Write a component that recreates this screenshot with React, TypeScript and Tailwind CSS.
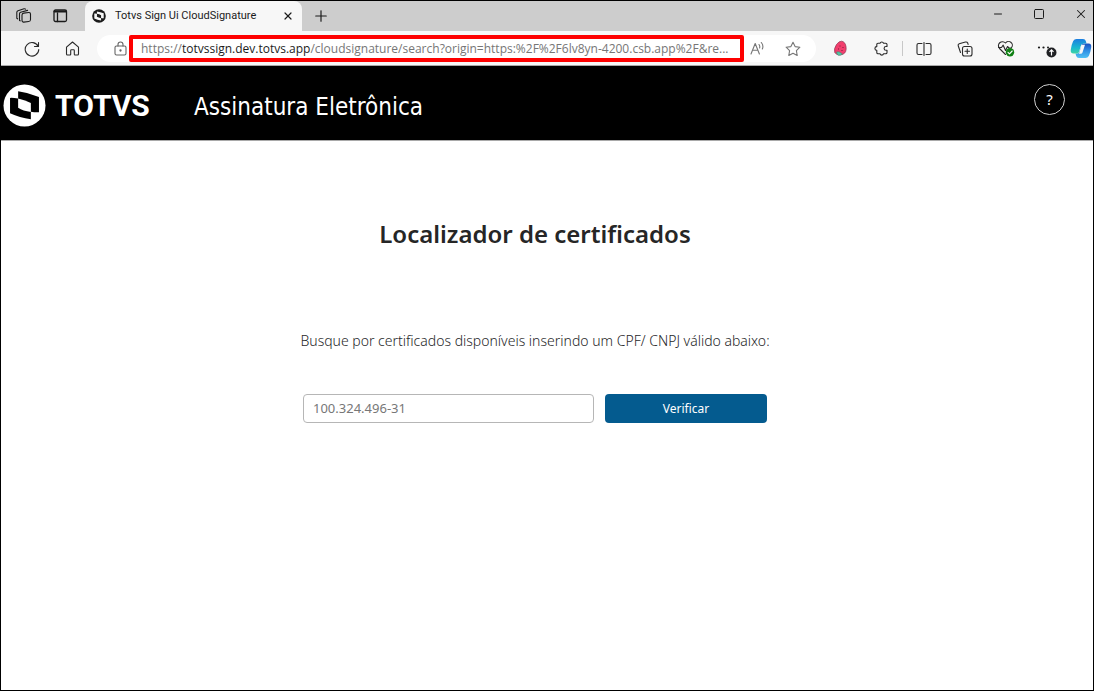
import React from 'react';
import { X, Plus, Minus, Square } from 'lucide-react';

const iconProps = {
  fill: 'none',
  stroke: 'currentColor',
  strokeWidth: 1.1,
  strokeLinecap: 'round' as const,
  strokeLinejoin: 'round' as const,
};

function TotvsMark({ size, fg, bg }: { size: number; fg: string; bg: string }) {
  return (
    <svg width={size} height={size} viewBox="0 0 44 44" aria-hidden="true" className="shrink-0">
      <circle cx="22" cy="22" r="21.5" fill={fg} />
      <path d="M15.500 7.500 Q26 8.800 36.800 13.400 V28.800 Q33 29 28.500 28.300 V36 Q17 34.500 7.200 30 V14.200 Q10 14 15.500 14.800 Z" fill={bg} />
      <path d="M15.500 14.800 Q23 16.300 28.500 19.500 V28.700 Q20.500 27.500 15.500 24.300 Z" fill={fg} />
    </svg>
  );
}

function ToolButton({ label, children }: { label: string; children: React.ReactNode }) {
  return (
    <button aria-label={label} className="flex w-10 shrink-0 items-center justify-center">
      {children}
    </button>
  );
}

function TabStrip() {
  return (
    <div className="flex h-[30px] bg-[#cdcdcd] text-[#1b1b1b]">
      <div className="flex w-[84px] shrink-0 items-center gap-5 rounded-br-lg pl-[14px]">
        <button aria-label="Workspaces">
          <svg width="18" height="18" viewBox="0 0 18 18" {...iconProps}>
            <rect x="7" y="6" width="8.500" height="9" rx="1.800" transform="skewY(-6) translate(0 1)" />
            <path d="M5.200 13.800 4.500 13.400V6.800Q4.500 5.600 5.600 5.200L12.600 3.400" />
            <path d="M2.600 11.800 1.800 11.200V5.500Q1.800 4.200 3 3.800L9 1.800Q10 1.600 10.600 2.200" />
          </svg>
        </button>
        <button aria-label="Vertical tabs">
          <svg width="15" height="14" viewBox="0 0 15 14" {...iconProps} strokeWidth={1.3}>
            <rect x="1" y="1" width="12.500" height="11.500" rx="1.500" />
            <path d="M1.500 2.500H13" strokeWidth="2" />
            <path d="M4.500 4V12.500" />
          </svg>
        </button>
      </div>
      <div className="flex w-[217px] shrink-0 items-center rounded-t-lg bg-[#f7f7f7] pl-[7px] pr-2">
        <TotvsMark size={14} fg="#1b1b1b" bg="#f7f7f7" />
        <span className="ml-[9px] flex-1 whitespace-nowrap font-['Roboto',sans-serif] text-[11px]">Totvs Sign Ui CloudSignature</span>
        <button aria-label="Close tab">
          <X size={12} strokeWidth={2.4} />
        </button>
      </div>
      <button aria-label="New tab" className="ml-[10px] self-center">
        <Plus size={18} strokeWidth={1.6} />
      </button>
      <div className="ml-auto flex items-center gap-[29px] pr-[5px] pb-1">
        <button aria-label="Minimize">
          <Minus size={12} strokeWidth={2} />
        </button>
        <button aria-label="Maximize">
          <Square size={12} strokeWidth={2} />
        </button>
        <button aria-label="Close">
          <X size={14} strokeWidth={1.8} />
        </button>
      </div>
    </div>
  );
}

function AddressBar() {
  return (
    <div className="flex h-[27px] min-w-0 flex-1 items-center rounded-full bg-white">
      <button aria-label="Site information" className="flex w-8 shrink-0 justify-end pr-[2px] text-[#666]">
        <svg width="13" height="15" viewBox="0 0 13 15" {...iconProps}>
          <rect x="1" y="5" width="11" height="9" rx="1.500" />
          <path d="M4 5V3.500A2.500 2.500 0 0 1 9 3.500V5" />
          <circle cx="6.500" cy="9.500" r="0.600" fill="currentColor" />
        </svg>
      </button>
      <div
        role="textbox"
        tabIndex={0}
        aria-label="Address"
        className="flex h-[27px] min-w-0 flex-1 items-center rounded-xs border-4 border-[#fe0000] bg-white px-2 text-[#767676]"
      >
        <span className="whitespace-nowrap font-['Open_Sans',sans-serif] text-[12px]">
          https://<span className="text-[#1b1b1b]">totvssign.dev.totvs.app</span>
          /cloudsignature/search?origin=https:%2F%2F6lv8yn-4200.csb.app%2F&amp;re...
        </span>
      </div>
      <div className="flex shrink-0 items-center gap-5 pr-[15px] pl-[6px] text-[#767676]">
        <button aria-label="Read aloud">
          <svg width="15" height="15" viewBox="0 0 15 15" {...iconProps}>
            <path d="M1 13 5.200 2.500 9.400 13M2.600 9.300H7.900" />
            <path d="M9 3.500Q10.200 5 9.600 7M11.300 1.500Q13.900 4.500 12.300 8" />
          </svg>
        </button>
        <button aria-label="Add to favorites">
          <svg width="16" height="16" viewBox="0 0 16 16" {...iconProps}>
            <path d="M8 1.200 10.100 5.600 14.900 6.200 11.400 9.600 12.200 14.500 8 12.200 3.800 14.500 4.600 9.600 1.100 6.200 5.900 5.600Z" />
          </svg>
        </button>
      </div>
    </div>
  );
}

function Toolbar() {
  return (
    <div className="flex h-[35px] items-stretch border-b border-[#a9a9a9] bg-[#f7f7f7] pt-px pl-[11px] text-[#2b2b2b]">
      <ToolButton label="Refresh">
        <svg width="16" height="16" viewBox="0 0 16 16" {...iconProps}>
          <path d="M14.200 5.500A6.800 6.800 0 1 0 14.800 8.600M14.500 1.500V5.500H10.500" />
        </svg>
      </ToolButton>
      <ToolButton label="Home">
        <svg width="15" height="15" viewBox="0 0 15 15" {...iconProps}>
          <path d="M1.500 6.200 7.500 1 13.500 6.200V13Q13.500 14 12.500 14H10Q9.300 14 9.300 13.300V9.500Q9.300 8.800 8.600 8.800H6.400Q5.700 8.800 5.700 9.500V13.300Q5.700 14 5 14H2.500Q1.500 14 1.500 13Z" />
        </svg>
      </ToolButton>
      <div className="flex min-w-0 flex-1 items-center pr-1 pl-[5px]">
        <AddressBar />
      </div>
      <div className="flex shrink-0 gap-px">
        <ToolButton label="Extension">
          <svg width="15" height="17" viewBox="0 0 15 17">
            <path d="M8.500 1.200Q12 1.500 13 6.500Q14 12.500 9.500 14.500Q4 16 1.800 12.500Q0.500 9 3.500 4.500Q6 1 8.500 1.200Z" fill="#f23e6d" stroke="#8f3350" strokeWidth="0.700" />
            <path d="M3.500 12 6 11.800 9.500 14Q7.500 15.800 5.200 15.200Q4 14.500 3.500 12Z" fill="#54c7a6" stroke="#34876f" strokeWidth="0.500" />
            <path d="M7 5.500V6.500M10 7V8M5.500 8.500V9.500M9 10V11" stroke="#74213b" strokeWidth="1" />
          </svg>
        </ToolButton>
        <ToolButton label="Extensions">
          <svg width="15" height="15" viewBox="0 0 15 15" {...iconProps}>
            <path d="M2.800 3.500Q2.800 2.300 4 2.300H6A1.900 1.900 0 0 1 9.600 2.300H11.700Q13 2.300 13 3.500V5.500H12A1.900 1.900 0 0 0 12 9.300H13V11.500Q13 12.800 11.700 12.800H9.600A1.900 1.900 0 0 1 6 12.800H4Q2.800 12.800 2.800 11.500V9.400A1.900 1.900 0 0 1 2.800 5.600Z" />
          </svg>
        </ToolButton>
        <div className="h-[15px] w-px self-center bg-[#c8c8c8]" />
        <ToolButton label="Split screen">
          <svg width="16" height="14" viewBox="0 0 16 14" {...iconProps}>
            <path d="M6 1.500H2.500Q1 1.500 1 3V11Q1 12.500 2.500 12.500H6M10 1.500H13.500Q15 1.500 15 3V11Q15 12.500 13.500 12.500H10M8 0.500V13.500" />
          </svg>
        </ToolButton>
        <ToolButton label="Collections">
          <svg width="16" height="16" viewBox="0 0 16 16" {...iconProps}>
            <rect x="5.500" y="5.500" width="9.500" height="9.500" rx="2" />
            <path d="M10.250 8V12.500M8 10.250H12.500" />
            <path d="M3.500 11.500 1.200 4.800Q0.800 3.200 2.200 2.700L8.500 1Q10.200 0.700 10.700 2L11.100 3.400" />
          </svg>
        </ToolButton>
        <ToolButton label="Browser essentials">
          <svg width="18" height="17" viewBox="0 0 18 17" {...iconProps}>
            <path d="M8.500 14.500 2.500 8.500A3.700 3.700 0 0 1 8.500 3 3.700 3.700 0 0 1 14.600 7.500" />
            <path d="M1.500 7.500H4.500L6.200 5.200 8.500 10.500 10.500 6.500 12 8H14.500" />
            <circle cx="13" cy="12.300" r="4.200" fill="#108014" stroke="none" />
            <path d="M11 12.400 12.500 13.800 15.200 11" stroke="#fff" />
          </svg>
        </ToolButton>
        <ToolButton label="Settings and more">
          <svg width="22" height="18" viewBox="0 0 22 18">
            <circle cx="3" cy="7.500" r="1.100" fill="#1b1b1b" />
            <circle cx="7.500" cy="7.500" r="1.100" fill="#1b1b1b" />
            <circle cx="12" cy="7.500" r="1" fill="#1b1b1b" />
            <circle cx="15.500" cy="12.500" r="5" fill="#202124" />
            <path d="M15.500 15.500V10M13.500 11.800 15.500 9.800 17.500 11.800" fill="none" stroke="#fff" strokeWidth="1.200" />
          </svg>
        </ToolButton>
        <button aria-label="Copilot" className="ml-[2px] flex shrink-0 items-center pr-px">
          <svg width="22" height="21" viewBox="0 0 22 21">
            <defs>
              <linearGradient id="copilotTeal" x1="0" y1="0" x2="0" y2="1">
                <stop offset="0" stopColor="#1c7ee0" />
                <stop offset="0.600" stopColor="#18b8d0" />
                <stop offset="1" stopColor="#3fd3a4" />
              </linearGradient>
              <linearGradient id="copilotBlue" x1="0" y1="0" x2="0" y2="1">
                <stop offset="0" stopColor="#1a4fc0" />
                <stop offset="0.500" stopColor="#2f8fe4" />
                <stop offset="1" stopColor="#4fc0f4" />
              </linearGradient>
            </defs>
            <path d="M15.500 20H9Q6.800 20 6.200 18L5.500 15.500H7.500Q9 15.500 9.700 13L11.500 7Q12 5.500 14 5.500H18.500Q21.800 5.500 21.200 9.500Q20.500 14.500 18.800 18Q17.700 20 15.500 20Z" fill="url(#copilotBlue)" />
            <path d="M6.500 1H13Q15.200 1 15.800 3L16.500 5.500H14Q11.500 5.500 10.800 8L9 14Q8.500 15.500 6.500 15.500H3.500Q0.200 15.500 0.800 11.500Q1.500 6.500 3.200 3Q4.300 1 6.500 1Z" fill="url(#copilotTeal)" />
            <path d="M11.300 6.800H15L12.500 14.500Q12.100 15.700 10.800 15.700H8.800Q9.500 14.500 9.900 13Z" fill="#f7f7f7" />
          </svg>
        </button>
      </div>
    </div>
  );
}

function SiteHeader() {
  return (
    <header className="flex h-[75px] items-center border-b border-[#a9a9a9] bg-black pt-1 pl-[2px] pr-7 text-white">
      <TotvsMark size={43} fg="#fff" bg="#000" />
      <span className="ml-[9px] w-[96px] font-['Roboto',sans-serif] text-[30px] font-bold">TOTVS</span>
      <h1 className="ml-[43px] whitespace-nowrap pt-1 font-['DejaVu_Sans_Condensed','Open_Sans',sans-serif] text-[24px]">
        Assinatura Eletrônica
      </h1>
      <button aria-label="Ajuda" className="mb-3 ml-auto flex size-[31px] items-center justify-center rounded-full border border-[#d0d0d0] text-[15px]">
        ?
      </button>
    </header>
  );
}

function CertificateSearch() {
  return (
    <main className="flex flex-col items-center pt-[75px] pr-6 text-[#1f2729]">
      <h2 className="text-[24px] leading-9 font-semibold text-[#262626]">Localizador de certificados</h2>
      <form className="mt-[77px] flex flex-col items-center" onSubmit={(e) => e.preventDefault()}>
        <label htmlFor="documento" className="text-[14px] leading-6 font-light">
          Busque por certificados disponíveis inserindo um CPF/ CNPJ válido abaixo:
        </label>
        <div className="mt-[41px] flex gap-[11px]">
          <input
            id="documento"
            type="text"
            defaultValue="100.324.496-31"
            className="h-[29px] w-[291px] rounded-[4px] border border-[#b6b6b6] px-[9px] pb-[2px] text-[13px] text-[#777]"
          />
          <button type="submit" className="h-[29px] w-[162px] rounded-[4px] bg-[#045b8f] text-[12px] text-white">
            Verificar
          </button>
        </div>
      </form>
    </main>
  );
}

export default function App() {
  return (
    <div className="min-h-screen border border-black bg-white font-['Noto_Sans',sans-serif]">
      <TabStrip />
      <Toolbar />
      <SiteHeader />
      <CertificateSearch />
    </div>
  );
}
